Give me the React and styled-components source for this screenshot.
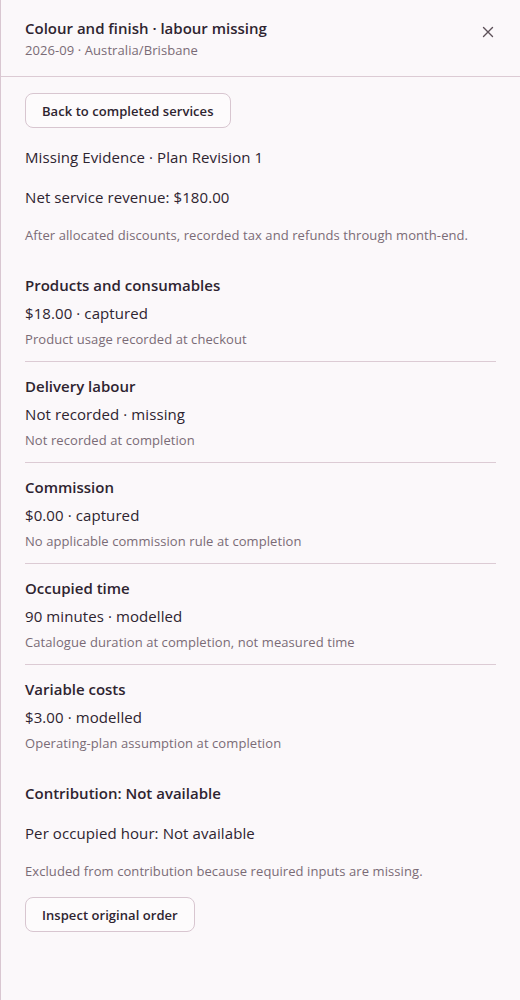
import React from "react";
import styled, { createGlobalStyle } from "styled-components";

const Global = createGlobalStyle`
  html, body { margin: 0; padding: 0; background: #fbf8fa; }
  body { font-family: "Open Sans", "Noto Sans", sans-serif; color: #2e2430; -webkit-font-smoothing: antialiased; }
  * { box-sizing: border-box; }
`;

const Panel = styled.aside`
  width: 520px;
  min-height: 1000px;
  background: #fbf8fa;
  border-left: 1px solid #d9c7d1;
  display: flex;
  flex-direction: column;
`;

const Header = styled.header`
  display: flex;
  align-items: flex-start;
  justify-content: space-between;
  padding: 18px 24px 17px 24px;
  border-bottom: 1px solid #dccbd4;
`;

const HeadText = styled.div`
  display: flex;
  flex-direction: column;
  gap: 3px;
`;

const Title = styled.h2`
  margin: 0;
  font-size: 15px;
  line-height: 20px;
  font-weight: 600;
  color: #2e2430;
`;

const Sub = styled.div`
  font-size: 13px;
  line-height: 18px;
  letter-spacing: 0.08px;
  color: #7a6b76;
`;

const Close = styled.button`
  border: 0;
  background: transparent;
  padding: 0;
  width: 24px;
  height: 24px;
  margin-top: 2px;
  margin-right: -4px;
  display: flex;
  align-items: center;
  justify-content: center;
  color: #5d5159;
  cursor: pointer;
`;

const Body = styled.div`
  display: flex;
  flex-direction: column;
  align-items: flex-start;
  padding: 16px 24px 24px 24px;
`;

const Button = styled.button`
  height: 35px;
  padding: 0 16px;
  border: 1px solid #d8c6d0;
  border-radius: 8px;
  background: #fdfbfc;
  font-family: inherit;
  font-size: 13px;
  font-weight: 600;
  letter-spacing: 0.05px;
  color: #2e2430;
  margin-top: ${(p) => p.$mt || 0}px;
  cursor: pointer;
`;

const Line = styled.p`
  margin: ${(p) => p.$mt || 0}px 0 0 0;
  font-size: 15px;
  line-height: 20px;
  font-weight: ${(p) => (p.$bold ? 600 : 400)};
  letter-spacing: ${(p) => (p.$bold ? 0 : 0.09)}px;
  color: #2e2430;
`;

const Note = styled.p`
  margin: ${(p) => p.$mt || 0}px 0 0 0;
  font-size: 13px;
  line-height: 18px;
  letter-spacing: 0.08px;
  color: #7a6b76;
`;

const Sections = styled.div`
  align-self: stretch;
  display: flex;
  flex-direction: column;
  margin-top: 31px;
`;

const Section = styled.section`
  display: flex;
  flex-direction: column;
  padding: 14px 0 13px;
  border-bottom: 1px solid #dccbd4;
  &:first-child { padding-top: 0; }
  &:last-child { border-bottom: 0; padding-bottom: 0; }
`;

const SecTitle = styled.h3`
  margin: 0;
  font-size: 15px;
  line-height: 20px;
  font-weight: 600;
  color: #2e2430;
`;

const SecValue = styled.div`
  margin-top: 8px;
  font-size: 15px;
  line-height: 20px;
  letter-spacing: 0.09px;
  color: #2e2430;
`;

const SecNote = styled.div`
  margin-top: 7px;
  font-size: 13px;
  line-height: 18px;
  letter-spacing: 0.08px;
  color: #7a6b76;
`;

const rows = [
  ["Products and consumables", "$18.00 · captured", "Product usage recorded at checkout"],
  ["Delivery labour", "Not recorded · missing", "Not recorded at completion"],
  ["Commission", "$0.00 · captured", "No applicable commission rule at completion"],
  ["Occupied time", "90 minutes · modelled", "Catalogue duration at completion, not measured time"],
  ["Variable costs", "$3.00 · modelled", "Operating-plan assumption at completion"],
];

export default function App() {
  return (
    <>
      <Global />
      <Panel>
        <Header>
          <HeadText>
            <Title>Colour and finish · labour missing</Title>
            <Sub>2026-09 · Australia/Brisbane</Sub>
          </HeadText>
          <Close aria-label="Close">
            <svg width="12" height="12" viewBox="0 0 12 12" fill="none" stroke="currentColor" strokeWidth="1.4" strokeLinecap="round">
              <path d="M1.5 1.5L10.5 10.5M10.5 1.5L1.5 10.5" />
            </svg>
          </Close>
        </Header>
        <Body>
          <Button>Back to completed services</Button>
          <Line $mt={19}>Missing Evidence · Plan Revision 1</Line>
          <Line $mt={20}>Net service revenue: $180.00</Line>
          <Note $mt={19}>After allocated discounts, recorded tax and refunds through month-end.</Note>
          <Sections>
            {rows.map(([t, v, n]) => (
              <Section key={t}>
                <SecTitle>{t}</SecTitle>
                <SecValue>{v}</SecValue>
                <SecNote>{n}</SecNote>
              </Section>
            ))}
          </Sections>
          <Line $mt={31} $bold>Contribution: Not available</Line>
          <Line $mt={20}>Per occupied hour: Not available</Line>
          <Note $mt={19}>Excluded from contribution because required inputs are missing.</Note>
          <Button $mt={17}>Inspect original order</Button>
        </Body>
      </Panel>
    </>
  );
}
